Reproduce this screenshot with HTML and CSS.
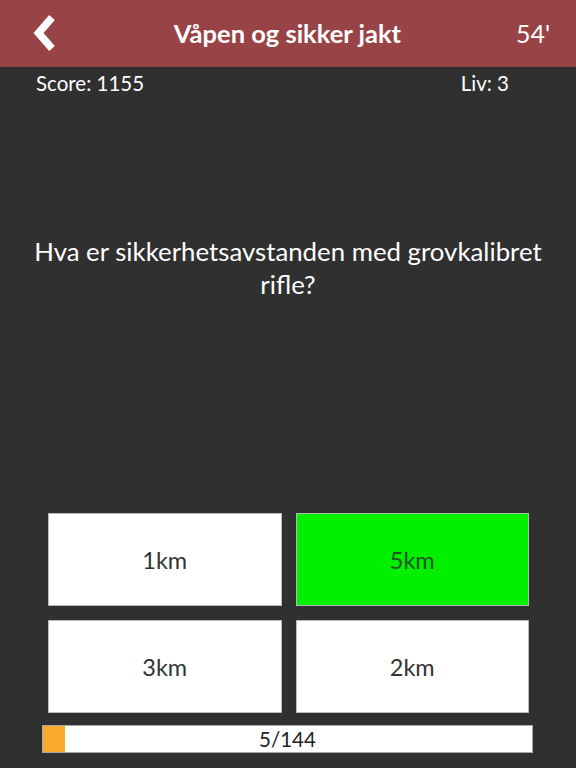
FILE: index.html
```html
<!DOCTYPE html>
<html lang="no">
<head>
<meta charset="utf-8">
<title>Våpen og sikker jakt</title>
<link rel="stylesheet" href="styles.css">
</head>
<body>
<div class="page">
  <header class="topbar">
    <span class="back">
      <svg width="26" height="36" viewBox="0 0 26 36" aria-hidden="true">
        <polyline points="19,2.5 5.5,18 19,33.5" fill="none" stroke="#fff" stroke-width="7.5" stroke-linejoin="miter" stroke-miterlimit="10"/>
      </svg>
    </span>
    <h1 class="title">Våpen og sikker jakt</h1>
    <span class="timer">54'</span>
  </header>
  <div class="stats">
    <span>Score: 1155</span>
    <span>Liv: 3</span>
  </div>
  <p class="question">Hva er sikkerhetsavstanden med grovkalibret rifle?</p>
  <div class="spacer"></div>
  <div class="answers">
    <button class="answer">1km</button>
    <button class="answer correct">5km</button>
    <button class="answer">3km</button>
    <button class="answer">2km</button>
  </div>
  <div class="progress">
    <div class="progress-fill" style="width: 22px"></div>
    <span class="progress-label">5/144</span>
  </div>
</div>
</body>
</html>
```

FILE: styles.css
```css
* { box-sizing: border-box; }
html, body {
  margin: 0;
  padding: 0;
  background: #303030;
}
body {
  font-family: Lato, "Open Sans", "Liberation Sans", sans-serif;
  color: #fff;
}
.page {
  display: flex;
  flex-direction: column;
  height: 768px;
  width: 576px;
}
.topbar {
  height: 67px;
  background: #984447;
  display: flex;
  align-items: center;
  position: relative;
  padding: 0 26px 0 33px;
}
.back {
  width: 26px;
  height: 36px;
  display: flex;
  margin-top: -1px;
}
.title {
  flex: 1;
  margin: 0;
  text-align: center;
  font-size: 25.5px;
  font-weight: 700;
  color: #fff;
  margin-top: -2px;
}
.timer {
  font-size: 25px;
  font-weight: 400;
  margin-top: -2px;
}
.stats {
  height: 32px;
  line-height: 32px;
  display: flex;
  justify-content: space-between;
  padding: 0 67px 0 36px;
  font-size: 20.5px;
}
.question {
  margin: 136px 20px 0;
  text-align: center;
  font-size: 25.8px;
  line-height: 33px;
}
.spacer { flex: 1; }
.answers {
  display: grid;
  grid-template-columns: 1fr 1fr;
  grid-auto-rows: 93px;
  gap: 14px;
  padding: 0 47px 0 48px;
}
.answer {
  background: #fff;
  border: 1px solid #b8b8b8;
  font-family: inherit;
  font-size: 23.5px;
  color: #333;
  padding: 0;
}
.answer.correct {
  background: #00f000;
  color: #245224;
}
.progress {
  position: relative;
  margin: 12px 43px 15px 42px;
  height: 28px;
  background: #fff;
  border: 1px solid #aaa;
  display: flex;
  align-items: center;
  justify-content: center;
}
.progress-fill {
  position: absolute;
  left: 0;
  top: 0;
  bottom: 0;
  background: #f9ab2d;
}
.progress-label {
  position: relative;
  color: #222;
  font-size: 20.5px;
}
```
